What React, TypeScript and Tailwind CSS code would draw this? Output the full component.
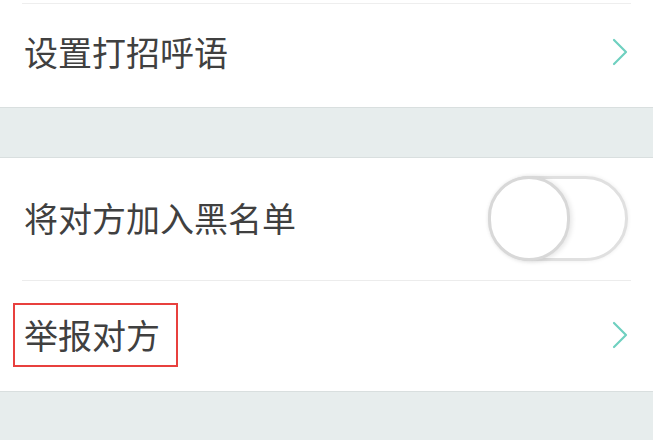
import React from "react";

function Chevron() {
  return (
    <svg width="18" height="28" viewBox="0 0 18 28" fill="none" className="shrink-0">
      <path d="M3 2 L15 14 L3 26" stroke="#6fd0c0" strokeWidth="2.2" strokeLinecap="round" strokeLinejoin="round" />
    </svg>
  );
}

function Toggle() {
  return (
    <div className="relative h-[85px] w-[140px] rounded-full border-[3px] border-[#e0e0e0] bg-white shadow-[0_0_4px_rgba(0,0,0,0.08)]">
      <div className="absolute -left-[3px] -top-[3px] h-[85px] w-[82px] rounded-full border-[3px] border-[#d8d8d8] bg-white shadow-[2px_1px_5px_rgba(0,0,0,0.1)]" />
    </div>
  );
}

export default function App() {
  const font = { fontFamily: '"Noto Sans CJK SC", "Noto Sans", sans-serif' };
  return (
    <div className="h-[440px] w-[653px] overflow-hidden bg-[#e7eded]" style={font}>
      <div className="bg-white">
        <div className="h-[3px]" />
        <div className="mx-[22px] h-px bg-[#eeeeee]" />
        <div className="flex h-[103px] items-center justify-between pb-[8px] pl-[24px] pr-[24px]">
          <span className="text-[34px] leading-none text-[#404040]">设置打招呼语</span>
          <Chevron />
        </div>
      </div>
      <div className="h-[51px] border-y border-[#d9dfdf] bg-[#e7eded]" />
      <div className="bg-white">
        <div className="flex h-[122px] items-center justify-between pb-[2px] pl-[24px] pr-[25px]">
          <span className="text-[34px] leading-none text-[#404040]">将对方加入黑名单</span>
          <Toggle />
        </div>
        <div className="mx-[22px] h-px bg-[#ececec]" />
        <div className="flex h-[110px] items-center justify-between pb-[3px] pl-[24px] pr-[24px]">
          <span className="relative text-[34px] leading-none text-[#404040]">
            举报对方
            <span className="absolute -left-[11px] -right-[18px] -top-[15px] -bottom-[15px] border-2 border-[#e8403e]" />
          </span>
          <Chevron />
        </div>
      </div>
      <div className="border-t border-[#d9dfdf]" />
    </div>
  );
}
